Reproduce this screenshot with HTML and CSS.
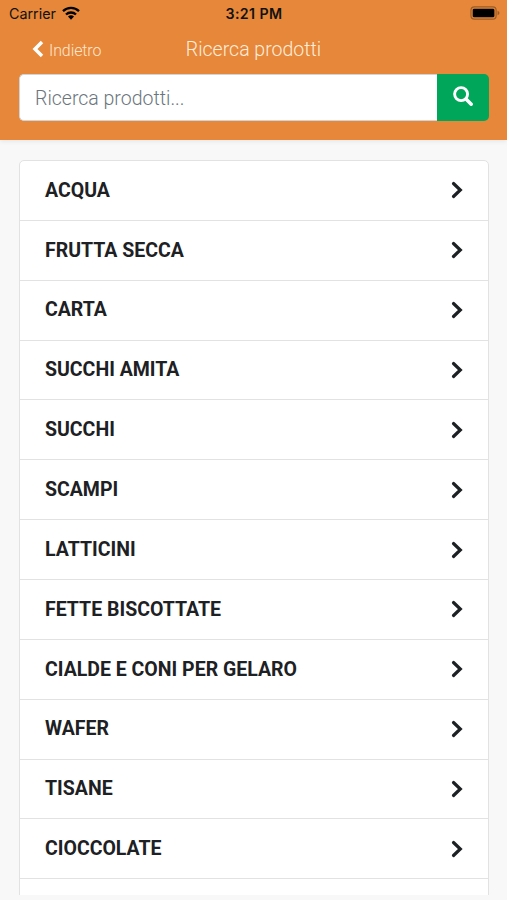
FILE: index.html
```
<!DOCTYPE html>
<html lang="it">
<head>
<meta charset="utf-8">
<title>Ricerca prodotti</title>
<link rel="stylesheet" href="styles.css">
</head>
<body>
<svg width="0" height="0" class="defs"><symbol id="chevron" viewBox="0 0 12 18"><path d="M2.500 2.500 9.300 9l-6.800 6.500" fill="none" stroke="currentColor" stroke-width="3.200" stroke-linecap="round" stroke-linejoin="miter"/></symbol></svg>
<header class="header">
  <div class="status">
    <div class="carrier"><span>Carrier</span>
      <svg class="wifi" viewBox="0 0 18 14"><g fill="none" stroke="#000" stroke-width="2.300"><path d="M1 5.200a11.500 11.500 0 0 1 16 0"/><path d="M4 8.500a7.200 7.200 0 0 1 10 0"/></g><path d="M6 10.600a4.300 4.300 0 0 1 6 0L9 13.700z"/></svg>
    </div>
    <span class="time">3:21 PM</span>
    <svg class="battery" viewBox="0 0 31 14"><rect x="1" y=".7" width="26" height="12.600" rx="3.500" fill="none" stroke="#9b5d28" stroke-width="1.200"/><rect x="2.800" y="2.500" width="22.400" height="9" rx="1.500"/><path d="M28.500 4.800q2 .8 2 2.200t-2 2.200z" fill="#9b5d28"/></svg>
  </div>
  <nav class="nav">
    <a class="back"><svg viewBox="0 0 12 18"><path d="M10 2 3 9l7 7" fill="none" stroke="currentColor" stroke-width="3.500"/></svg><span>Indietro</span></a>
    <h1 class="title">Ricerca prodotti</h1>
  </nav>
  <form class="search">
    <input class="field" type="text" placeholder="Ricerca prodotti...">
    <button class="submit" type="button" aria-label="Cerca"><svg viewBox="0 0 20 20"><g fill="none" stroke="#fff" stroke-width="2.900"><circle cx="8.100" cy="8.100" r="6.500"/><path d="m13 13 5.200 5.200" stroke-width="3.500" stroke-linecap="round"/></g></svg></button>
  </form>
</header>
<main class="content">
  <ul class="list">
    <li><span>ACQUA</span><svg><use href="#chevron"/></svg></li>
    <li><span>FRUTTA SECCA</span><svg><use href="#chevron"/></svg></li>
    <li><span>CARTA</span><svg><use href="#chevron"/></svg></li>
    <li><span>SUCCHI AMITA</span><svg><use href="#chevron"/></svg></li>
    <li><span>SUCCHI</span><svg><use href="#chevron"/></svg></li>
    <li><span>SCAMPI</span><svg><use href="#chevron"/></svg></li>
    <li><span>LATTICINI</span><svg><use href="#chevron"/></svg></li>
    <li><span>FETTE BISCOTTATE</span><svg><use href="#chevron"/></svg></li>
    <li><span>CIALDE E CONI PER GELARO</span><svg><use href="#chevron"/></svg></li>
    <li><span>WAFER</span><svg><use href="#chevron"/></svg></li>
    <li><span>TISANE</span><svg><use href="#chevron"/></svg></li>
    <li><span>CIOCCOLATE</span><svg><use href="#chevron"/></svg></li>
    <li></li>
  </ul>
</main>
</body>
</html>
```
FILE: styles.css
```
* { box-sizing: border-box; }
body { margin: 0; height: 900px; overflow: hidden; display: flex; flex-direction: column; background: #f8f8f8; font-family: Roboto, sans-serif; color: #1d2124; }
.defs { display: none; }
.header { flex: none; height: 140px; background: #e68739; box-shadow: 0 1px 5px rgba(0,0,0,.09); }
.status { height: 28px; padding: 0 7px 0 9px; display: grid; grid-template-columns: 1fr auto 1fr; align-items: center; font: 14.500px/28px Inter, sans-serif; color: #111; }
.carrier { display: flex; align-items: center; gap: 6px; font-size: 14.300px; }
.wifi { width: 18px; height: 14px; margin-top: -2px; }
.time { font-weight: 600; font-size: 14.200px; letter-spacing: .4px; margin-left: -1px; }
.battery { width: 30px; height: 14px; justify-self: end; margin-top: -2px; }
.nav { height: 46px; padding: 0 32px; display: grid; grid-template-columns: 1fr auto 1fr; align-items: center; color: #fff; font-weight: 300; }
.back { display: flex; align-items: center; gap: 5px; margin-top: -2px; font-size: 16px; letter-spacing: -.1px; color: #ffe6d0; }
.back svg { width: 12px; height: 18px; color: #fff; margin-top: -3px; }
.title { margin: 0 0 2px; font-size: 19.500px; line-height: 24px; font-weight: 300; color: #ffeddc; }
.search { display: flex; height: 47px; margin: 0 18px 0 19px; }
.field { flex: 1; min-width: 0; border: 1px solid #ced4da; border-right: 0; border-radius: 5px 0 0 5px; padding: 1px 15px 0; font: 300 19.500px Roboto, sans-serif; background: #fff; }
.field::placeholder { color: #6c757d; opacity: 1; }
.submit { width: 52px; border: 0; padding: 0 0 3px; border-radius: 0 5px 5px 0; background: #00a65a; display: flex; align-items: center; justify-content: center; }
.submit svg { width: 20px; height: 20px; }
.content { height: 755px; overflow: hidden; padding: 20px 18px 0 19px; }
.list { list-style: none; margin: 0; padding: 0; border: 1px solid #e2e2e2; border-radius: 5px; background: #fff; }
.list li { height: 59.870px; padding: 0 25px; display: flex; align-items: center; justify-content: space-between; border-bottom: 1px solid #e2e2e2; font-size: 19.500px; line-height: 24px; font-weight: 700; }
.list span { margin-top: .6px; }
.list svg { width: 12px; height: 18px; }
```
